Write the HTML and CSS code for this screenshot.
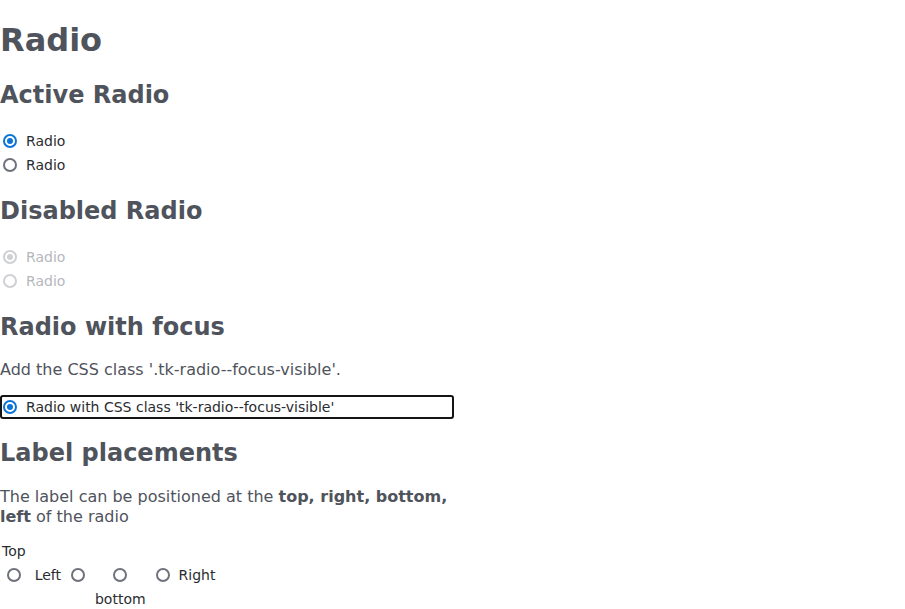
FILE: index.html
```html
<!DOCTYPE html>
<html lang="en">
<head>
<meta charset="utf-8">
<title>Radio</title>
<link rel="stylesheet" href="styles.css">
</head>
<body>
<main class="page">
  <h1 class="title">Radio</h1>

  <h2 class="section-title">Active Radio</h2>
  <div class="radio-list">
    <label class="radio">
      <span class="radio__control radio__control--checked"></span>
      <span class="radio__label">Radio</span>
    </label>
    <label class="radio">
      <span class="radio__control"></span>
      <span class="radio__label">Radio</span>
    </label>
  </div>

  <h2 class="section-title">Disabled Radio</h2>
  <div class="radio-list">
    <label class="radio radio--disabled">
      <span class="radio__control radio__control--checked"></span>
      <span class="radio__label">Radio</span>
    </label>
    <label class="radio radio--disabled">
      <span class="radio__control"></span>
      <span class="radio__label">Radio</span>
    </label>
  </div>

  <h2 class="section-title">Radio with focus</h2>
  <p class="text">Add the CSS class '.tk-radio--focus-visible'.</p>
  <div class="radio-list">
    <label class="radio radio--focus">
      <span class="radio__control radio__control--checked"></span>
      <span class="radio__label">Radio with CSS class 'tk-radio--focus-visible'</span>
    </label>
  </div>

  <h2 class="section-title">Label placements</h2>
  <p class="text text--lines">The label can be positioned at the <strong>top, right, bottom, left</strong> of the radio</p>
  <div class="placements">
    <label class="place place--top">
      <span class="place__top radio__label">Top</span>
      <span class="place__mid"><span class="radio__control"></span></span>
    </label>
    <label class="place">
      <span class="place__mid place__mid--wide"><span class="radio__label">Left</span><span class="radio__control"></span></span>
    </label>
    <label class="place">
      <span class="place__mid"><span class="radio__control"></span></span>
      <span class="place__bottom radio__label">bottom</span>
    </label>
    <label class="place">
      <span class="place__mid"><span class="radio__control"></span><span class="radio__label">Right</span></span>
    </label>
  </div>
</main>
</body>
</html>
```

FILE: styles.css
```css
html, body {
  margin: 0;
  padding: 0;
  background: #ffffff;
}

body {
  font-family: "DejaVu Sans", sans-serif;
  color: #4f535c;
}

.page {
  width: 454px;
}

.title {
  font-size: 32px;
  font-weight: bold;
  margin: 0.67em 0;
  color: #4f535c;
}

.section-title {
  font-size: 24px;
  font-weight: bold;
  margin: 0.83em 0;
  color: #4f535c;
}

.text {
  font-size: 16px;
  margin: 16px 0;
  color: #4f535c;
}

.text--lines {
  line-height: 20px;
  margin-bottom: 12px;
}

.text strong {
  font-weight: bold;
}

.radio-list {
  display: flex;
  flex-direction: column;
}

.radio {
  display: flex;
  align-items: center;
  gap: 6px;
  height: 24px;
  font-size: 14px;
  color: #2a2c30;
}

.radio--focus {
  box-shadow: inset 0 0 0 2px #151515;
  border-radius: 3px;
}

.radio__control {
  flex: none;
  box-sizing: border-box;
  width: 14px;
  height: 14px;
  margin: 3px;
  border: 2px solid #6f727b;
  border-radius: 50%;
  background: #fff;
  position: relative;
}

.radio__control--checked {
  border-color: #0b74d8;
}

.radio__control--checked::after {
  content: "";
  position: absolute;
  left: 2px;
  top: 2px;
  width: 6px;
  height: 6px;
  border-radius: 50%;
  background: #0b74d8;
}

.radio--disabled {
  color: #b5b7bc;
}

.radio--disabled .radio__control {
  border-color: #cfd0d4;
}

.radio--disabled .radio__control--checked::after {
  background: #cfd0d4;
}

.placements {
  display: flex;
  align-items: flex-start;
  gap: 3px;
  font-size: 14px;
  color: #2a2c30;
}

.place {
  display: grid;
  grid-template-rows: 24px 24px 24px;
  justify-items: center;
  align-items: center;
  padding: 0 2px;
}

.place--top {
  padding-right: 4px;
}

.place__top {
  grid-row: 1;
}

.place__mid {
  grid-row: 2;
  display: flex;
  align-items: center;
  gap: 6px;
}

.place__mid--wide {
  gap: 7px;
}

.place__bottom {
  grid-row: 3;
}
```
